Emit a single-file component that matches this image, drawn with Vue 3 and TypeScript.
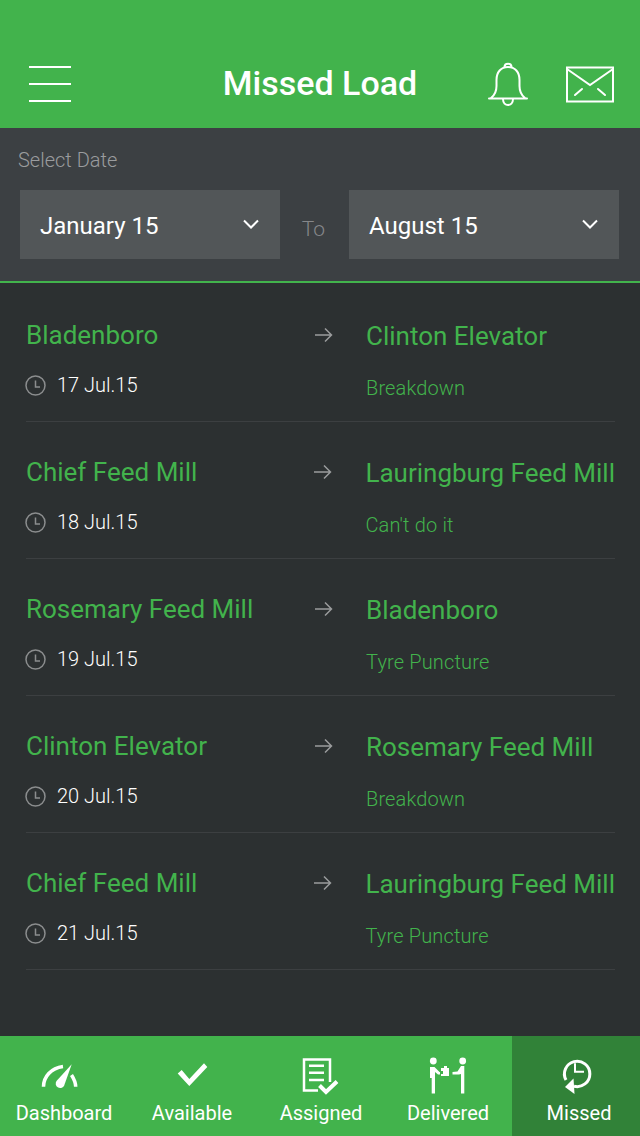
<template>
  <div class="screen">
    <header class="topbar">
      <button class="menu-btn" aria-label="Menu">
        <span></span><span></span><span></span>
      </button>
      <h1 class="title">Missed Load</h1>
      <div class="top-icons">
        <svg class="bell" width="40" height="44" viewBox="0 0 40 44" fill="none" stroke="#fff" stroke-width="2">
          <path d="M1 36.500h38M3 36c4-3 5.500-6 5.500-12v-6C8.500 10 13 5 20 5s11.500 5 11.500 13v6c0 6 1.500 9 5.500 12" stroke-linecap="round" />
          <path d="M16.500 5c0-4.500 7-4.500 7 0" />
          <path d="M15 37c0 8 10 8 10 0" />
        </svg>
        <svg class="mail" width="48" height="37" viewBox="0 0 48 37" fill="none" stroke="#fff" stroke-width="2">
          <rect x="1" y="1.500" width="46" height="34" />
          <path d="M1 3l23 16L47 3" />
          <path d="M9 29l7-6M39 29l-7-6" stroke-linecap="round" />
        </svg>
      </div>
    </header>

    <section class="filter">
      <div class="filter-label">Select Date</div>
      <div class="filter-row">
        <div class="select from">
          <span>January 15</span>
          <svg width="18" height="11" viewBox="0 0 18 11" fill="none" stroke="#fff" stroke-width="2"><path d="M2 1.500l7 7 7-7" /></svg>
        </div>
        <div class="to">To</div>
        <div class="select until">
          <span>August 15</span>
          <svg width="18" height="11" viewBox="0 0 18 11" fill="none" stroke="#fff" stroke-width="2"><path d="M2 1.500l7 7 7-7" /></svg>
        </div>
      </div>
    </section>

    <main class="list">
      <div class="load" v-for="load in loads" :key="load.date">
        <div class="col-from">
          <div class="place">{{ load.from }}</div>
          <div class="date">
            <svg width="21" height="21" viewBox="0 0 21 21" fill="none" stroke="#8b8d8e" stroke-width="1.500">
              <circle cx="10.500" cy="10.500" r="9.500" />
              <path d="M10.500 5.500v6.500h4.500" />
            </svg>
            <span>{{ load.date }}</span>
          </div>
        </div>
        <svg class="arrow" width="18" height="16" viewBox="0 0 18 16" fill="none" stroke="#9a9c9d" stroke-width="1.500">
          <path d="M0 8h16.500M10 1.500L16.500 8 10 14.500" />
        </svg>
        <div class="col-to">
          <div class="place">{{ load.to }}</div>
          <div class="reason">{{ load.reason }}</div>
        </div>
      </div>
    </main>

    <nav class="tabs">
      <div class="tab" v-for="tab in tabs" :key="tab.label" :class="tab.label.toLowerCase()">
        <svg width="60" height="50" viewBox="0 0 60 50" fill="none" stroke="#fff" v-html="tab.icon"></svg>
        <span>{{ tab.label }}</span>
      </div>
    </nav>
  </div>
</template>

<script setup lang="ts">
const loads = [
  { from: 'Bladenboro', to: 'Clinton Elevator', date: '17 Jul.15', reason: 'Breakdown' },
  { from: 'Chief Feed Mill', to: 'Lauringburg Feed Mill', date: '18 Jul.15', reason: "Can't do it" },
  { from: 'Rosemary Feed Mill', to: 'Bladenboro', date: '19 Jul.15', reason: 'Tyre Puncture' },
  { from: 'Clinton Elevator', to: 'Rosemary Feed Mill', date: '20 Jul.15', reason: 'Breakdown' },
  { from: 'Chief Feed Mill', to: 'Lauringburg Feed Mill', date: '21 Jul.15', reason: 'Tyre Puncture' },
]

const tabs = [
  {
    label: 'Dashboard',
    icon: '<path stroke-width="3.500" d="M9.500 36.700C9.500 27 17 18 29 16.500M37.500 25c2.500 4 4.200 8 4.200 11.700"/><path fill="#fff" stroke="none" d="M37.700 14.300L30 36a4.300 4.300 0 0 1-7.500-5z"/>',
  },
  {
    label: 'Available',
    icon: '<path fill="#fff" stroke="none" d="M15.700 23.500l4-3.500 7.600 9L42 13.300l3.300 3.700-18 19z"/>',
  },
  {
    label: 'Assigned',
    icon: '<path stroke-width="2.500" d="M28 40.500H14V9.500h26V32"/><path stroke-width="2.500" d="M19 15.700h15M19 22.700h15M19 30h15"/><path stroke-width="4" d="M29.500 35.500l6.500 6.500 11-10.500"/>',
  },
  {
    label: 'Delivered',
    icon: '<g fill="#fff" stroke="none"><circle cx="15.300" cy="11" r="3.400"/><circle cx="44.700" cy="11" r="3.400"/><path d="M12 17h4.500l5 5h.5v2.500h-2L17 22v21.500h-3.300V28H12z"/><path d="M23 18h3v-2h3v2h2v8h-8v-2h2v-3h-2z"/><path d="M43 16h3.300v27.500H43V24l-2 .5h-6.500V22l5-.5z"/></g>',
  },
  {
    label: 'Missed',
    icon: '<path stroke-width="3" d="M20 30A12.700 12.700 0 1 1 28 36.200"/><path stroke-width="2" d="M29 13.300v8.400h9"/><path fill="#fff" stroke="none" d="M19 37l8.500-8.500 1 15.500z"/>',
  },
]
</script>

<style>
html,
body {
  margin: 0;
  background: #2c3031;
}
</style>

<style scoped>
.screen {
  width: 640px;
  height: 1136px;
  display: flex;
  flex-direction: column;
  background: #2c3031;
  font-family: Roboto, "Liberation Sans", sans-serif;
  overflow: hidden;
}

.topbar {
  height: 128px;
  flex: none;
  box-sizing: border-box;
  padding: 40px 26px 0;
  background: #42b34c;
  display: grid;
  grid-template-columns: 1fr auto 1fr;
  align-items: center;
}

.menu-btn {
  width: 42px;
  height: 36px;
  margin-left: 3px;
  padding: 0;
  border: 0;
  background: none;
  display: flex;
  flex-direction: column;
  justify-content: space-between;
}

.menu-btn span {
  display: block;
  height: 2px;
  background: #fff;
}

.title {
  margin: -2px 0 0;
  color: #fff;
  font-size: 34px;
  font-weight: 500;
}

.top-icons {
  justify-self: end;
  display: flex;
  align-items: center;
  gap: 38px;
}

.filter {
  height: 153px;
  flex: none;
  box-sizing: border-box;
  background: #3c4043;
  padding: 20px 21px 0 18px;
}

.filter-label {
  color: #9a9c9e;
  font-size: 20px;
  font-weight: 300;
  line-height: 24px;
}

.filter-row {
  display: flex;
  margin: 18px 0 0 2px;
}

.select {
  height: 69px;
  box-sizing: border-box;
  background: #525658;
  color: #fff;
  font-size: 24px;
  display: flex;
  align-items: center;
  justify-content: space-between;
}

.select span {
  padding-top: 2px;
}

.from {
  width: 260px;
  padding: 0 20px;
}

.until {
  width: 270px;
  padding: 0 20px;
}

.to {
  width: 69px;
  padding-right: 2px;
  box-sizing: border-box;
  text-align: center;
  color: #85878a;
  font-size: 21px;
  font-weight: 300;
  line-height: 78px;
}

.list {
  flex: 1;
  border-top: 2px solid #42b34c;
  padding: 2px 25px 0 26px;
}

.load {
  height: 137px;
  box-sizing: border-box;
  border-bottom: 1px solid #3c3f41;
  display: flex;
  align-items: flex-start;
}

.col-from {
  width: 289px;
  padding-top: 35px;
}

.arrow {
  margin-top: 42px;
}

.col-to {
  margin-left: 33px;
  padding-top: 36px;
}

.place {
  color: #42b34c;
  font-size: 26px;
  line-height: 30px;
  white-space: nowrap;
}

.date {
  display: flex;
  align-items: center;
  gap: 11px;
  margin: 23px 0 0 -1px;
  color: #fff;
  font-size: 20px;
  font-weight: 300;
  line-height: 24px;
}

.reason {
  margin-top: 25px;
  color: #42b34c;
  font-size: 20px;
  font-weight: 300;
  letter-spacing: 0.15px;
  line-height: 24px;
}

.tabs {
  height: 100px;
  flex: none;
  display: grid;
  grid-template-columns: repeat(5, 128px);
  background: #42b34c;
}

.tab {
  display: flex;
  flex-direction: column;
  align-items: center;
  padding-top: 14px;
  box-sizing: border-box;
  color: #fff;
  font-size: 20px;
  line-height: 24px;
}

.tab span {
  margin-top: 1px;
}

.assigned span {
  margin-left: 2px;
}

.missed {
  background: #318238;
}

.missed span {
  margin-left: 6px;
}
</style>
